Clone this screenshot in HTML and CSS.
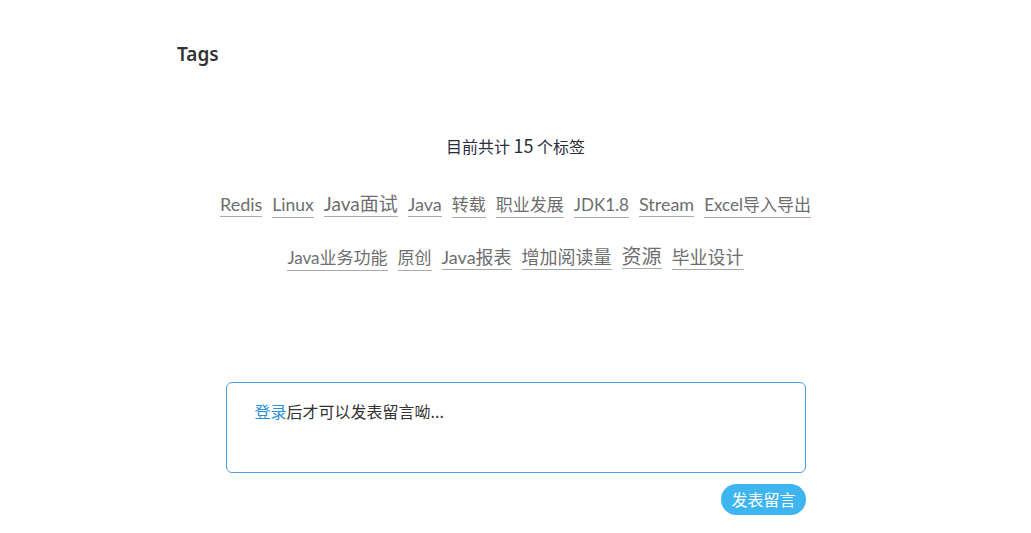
FILE: index.html
```html
<!DOCTYPE html>
<html lang="zh-CN">
<head>
<meta charset="utf-8">
<title>Tags</title>
<link rel="stylesheet" href="styles.css">
</head>
<body>
<main class="page">
  <h1 class="page-title">Tags</h1>
  <div class="tag-count">目前共计 <span class="tag-num">15</span> 个标签</div>
  <div class="tag-cloud">
    <a class="tag" style="font-size:18px">Redis</a>
    <a class="tag" style="font-size:17.5px">Linux</a>
    <a class="tag" style="font-size:19px">Java面试</a>
    <a class="tag" style="font-size:18px">Java</a>
    <a class="tag" style="font-size:17px">转载</a>
    <a class="tag" style="font-size:17px">职业发展</a>
    <a class="tag" style="font-size:17px">JDK1.8</a>
    <a class="tag" style="font-size:18px">Stream</a>
    <a class="tag" style="font-size:17px">Excel导入导出</a>
    <a class="tag" style="font-size:17px">Java业务功能</a>
    <a class="tag" style="font-size:17px">原创</a>
    <a class="tag" style="font-size:18px">Java报表</a>
    <a class="tag" style="font-size:18px">增加阅读量</a>
    <a class="tag" style="font-size:20px">资源</a>
    <a class="tag" style="font-size:18px">毕业设计</a>
  </div>
  <section class="comments">
    <div class="comment-box"><a class="login">登录</a>后才可以发表留言呦...</div>
    <div class="comment-actions"><button class="submit">发表留言</button></div>
  </section>
</main>
</body>
</html>
```

FILE: styles.css
```css
html, body {
  margin: 0;
  padding: 0;
  background: #fff;
}
body {
  font-family: "Noto Sans CJK SC", "Noto Sans", sans-serif;
  color: #333;
}
.page {
  width: 677px;
  margin: 0 auto;
  padding-top: 42px;
}
.page-title {
  margin: 0;
  font-family: "Noto Sans", "Noto Sans CJK SC", sans-serif;
  font-size: 19px;
  line-height: 24px;
  font-weight: 600;
  color: #333;
}
.tag-count {
  margin-top: 69px;
  text-align: center;
  font-size: 16px;
  line-height: 20px;
  color: #2b2b3a;
}
.tag-num {
  font-size: 18px;
}
.tag-cloud {
  margin: 36px auto 0;
  width: 640px;
  display: flex;
  flex-wrap: wrap;
  justify-content: center;
  align-items: baseline;
  column-gap: 10px;
  row-gap: 26px;
}
.tag {
  font-family: "Lato", "Noto Sans CJK SC", sans-serif;
  line-height: 24px;
  color: #6e6e6e;
  border-bottom: 1px solid #a8a8a8;
  text-decoration: none;
  cursor: pointer;
}
.comments {
  width: 580px;
  margin: 111px auto 0;
}
.comment-box {
  box-sizing: border-box;
  height: 91px;
  border: 1px solid #4b9de6;
  border-radius: 6px;
  padding: 18px 28px;
  font-size: 16px;
  line-height: 20px;
  color: #333;
}
.login {
  color: #2a8fd9;
  cursor: pointer;
}
.comment-actions {
  display: flex;
  justify-content: flex-end;
  margin-top: 11px;
}
.submit {
  height: 31px;
  padding: 0 10px;
  border: none;
  border-radius: 16px;
  background: #3fb5ef;
  color: #fff;
  font-family: inherit;
  font-size: 16px;
  line-height: 31px;
  cursor: pointer;
}
```
